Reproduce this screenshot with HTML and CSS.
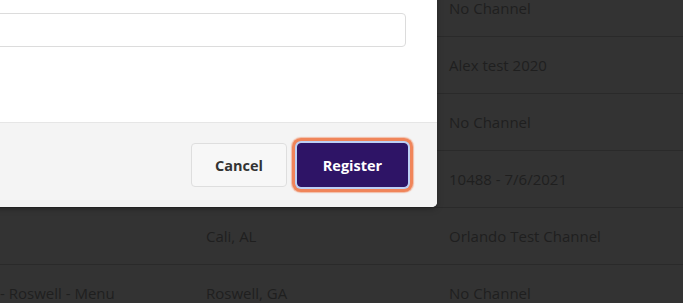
FILE: index.html
```html
<!DOCTYPE html>
<html lang="en">
<head>
<meta charset="utf-8">
<title>Register</title>
<link rel="stylesheet" href="styles.css">
</head>
<body>
<div class="page">
  <div class="table">
    <div class="row"><div class="cell c1"></div><div class="cell c2"></div><div class="cell c3">No Channel</div></div>
    <div class="row"><div class="cell c1"></div><div class="cell c2"></div><div class="cell c3">Alex test 2020</div></div>
    <div class="row"><div class="cell c1"></div><div class="cell c2"></div><div class="cell c3">No Channel</div></div>
    <div class="row"><div class="cell c1"></div><div class="cell c2"></div><div class="cell c3">10488 - 7/6/2021</div></div>
    <div class="row"><div class="cell c1"></div><div class="cell c2">Cali, AL</div><div class="cell c3">Orlando Test Channel</div></div>
    <div class="row"><div class="cell c1">- Roswell - Menu</div><div class="cell c2">Roswell, GA</div><div class="cell c3">No Channel</div></div>
  </div>

  <div class="modal" role="dialog">
    <div class="modal-body">
      <input class="field" type="text" aria-label="Name">
    </div>
    <div class="modal-footer">
      <button class="btn btn-cancel" type="button">Cancel</button>
      <button class="btn btn-primary" type="button">Register</button>
    </div>
  </div>
</div>
</body>
</html>
```

FILE: styles.css
```css
* { box-sizing: border-box; }

html, body {
  margin: 0;
  padding: 0;
  width: 683px;
  height: 303px;
  overflow: hidden;
  background: #333333;
  font-family: "Open Sans", "Noto Sans", sans-serif;
}

.page {
  position: relative;
  width: 683px;
  height: 303px;
  overflow: hidden;
}

.table {
  margin-top: -20px;
  display: flex;
  flex-direction: column;
}

.row {
  display: grid;
  grid-template-columns: 194px 243px 1fr;
  height: 57px;
  border-bottom: 1px solid #2a2a2a;
  align-items: center;
}

.cell {
  font-size: 15px;
  color: #1f1f1f;
  white-space: nowrap;
  padding-left: 12px;
}

.cell.c1 { padding-left: 0; }

.modal {
  position: absolute;
  left: -163px;
  top: -40px;
  width: 600px;
  background: #ffffff;
  border-radius: 0 0 5px 5px;
  box-shadow: 0 2px 6px rgba(0, 0, 0, 0.25);
  overflow: hidden;
}

.modal-body {
  padding: 53px 31px 75px 30px;
}

.field {
  display: block;
  width: 100%;
  height: 34px;
  border: 1px solid #dcdcdc;
  border-radius: 4px;
  background: #fff;
  font: inherit;
}

.modal-footer {
  background: #f4f4f4;
  border-top: 1px solid #e6e6e6;
  height: 85px;
  display: flex;
  align-items: center;
  justify-content: flex-end;
  gap: 10px;
  padding-right: 29px;
}

.btn {
  height: 44px;
  border-radius: 4px;
  font-family: "Open Sans", "Noto Sans", sans-serif;
  font-weight: 700;
  font-size: 14.5px;
  cursor: pointer;
}

.btn-cancel {
  width: 96px;
  background: #f7f7f7;
  border: 1px solid #dedede;
  color: #333333;
}

.btn-primary {
  width: 111px;
  background: #2e1466;
  border: 1px solid #2e1466;
  color: #ffffff;
  box-shadow: 0 0 0 2px #bdd0f5, 0 0 0 5px #f0855a, 0 0 1px 6px rgba(240, 133, 90, 0.5);
}
```
